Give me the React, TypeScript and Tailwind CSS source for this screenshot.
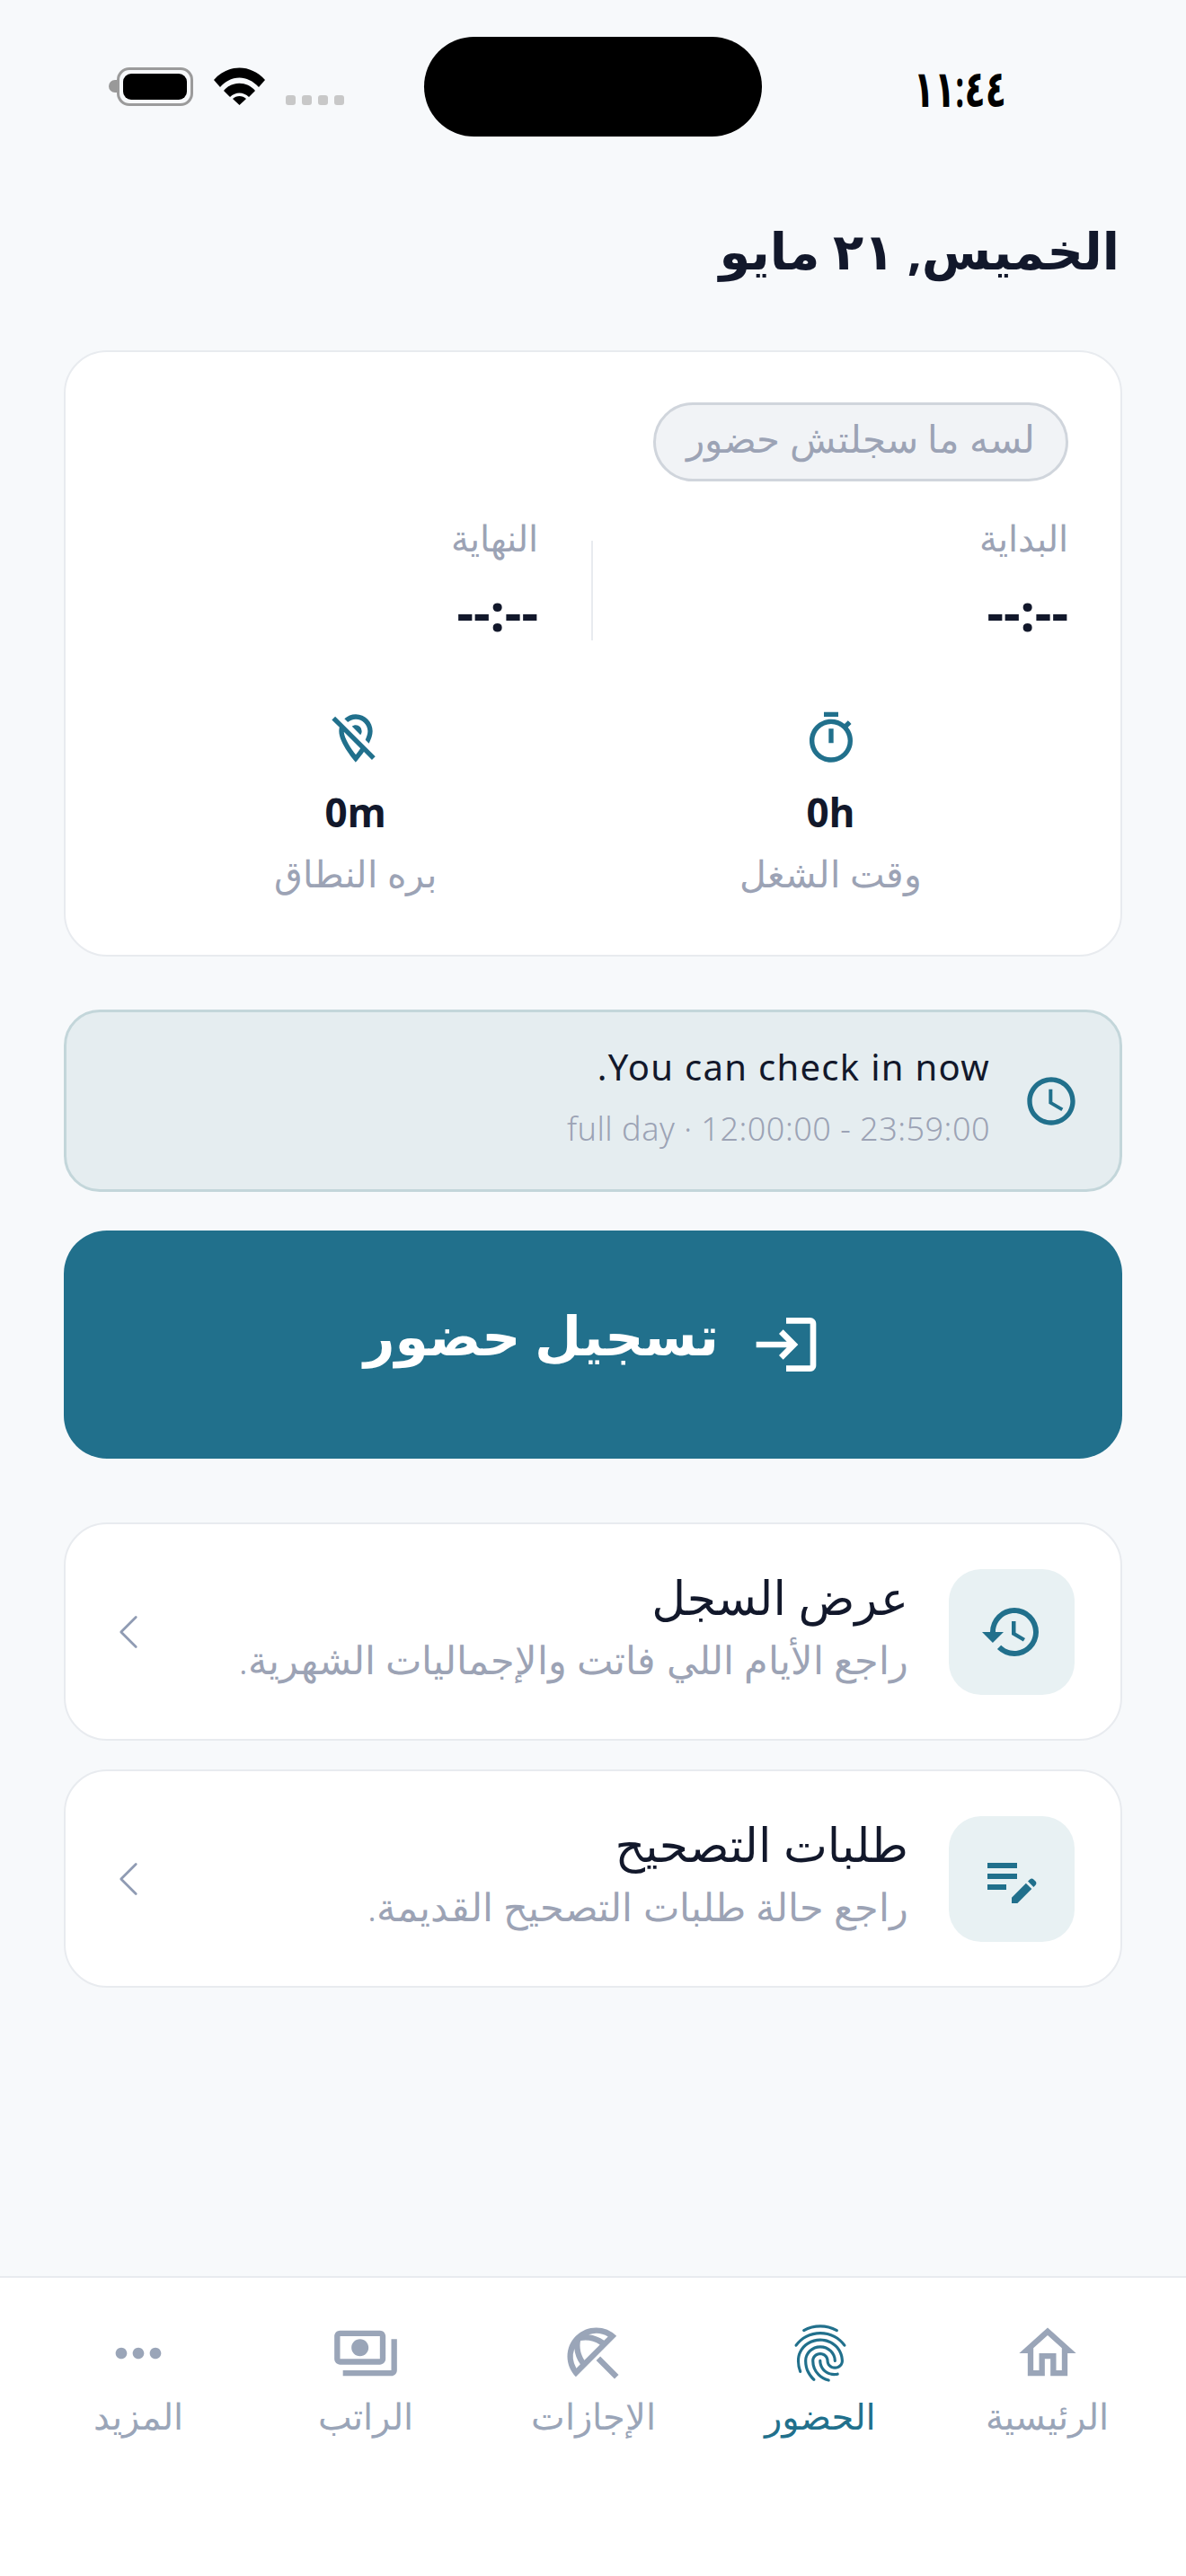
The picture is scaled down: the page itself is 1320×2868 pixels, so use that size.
import { ChevronLeft } from 'lucide-react';
import {
    MdEditNote,
    MdFingerprint,
    MdHistory,
    MdLogin,
    MdMoreHoriz,
    MdOutlineAccessTime,
    MdOutlineBeachAccess,
    MdOutlineHome,
    MdOutlineLocationOff,
    MdOutlinePayments,
    MdOutlineTimer,
} from 'react-icons/md';

const navItems = [
    { label: 'الرئيسية', Icon: MdOutlineHome },
    { label: 'الحضور', Icon: MdFingerprint, active: true },
    { label: 'الإجازات', Icon: MdOutlineBeachAccess },
    { label: 'الراتب', Icon: MdOutlinePayments },
    { label: 'المزيد', Icon: MdMoreHoriz },
];

const links = [
    { title: 'عرض السجل', sub: 'راجع الأيام اللي فاتت والإجماليات الشهرية.', Icon: MdHistory },
    { title: 'طلبات التصحيح', sub: 'راجع حالة طلبات التصحيح القديمة.', Icon: MdEditNote },
];

function StatusBar() {
    return (
        <div dir="ltr" className="relative h-[190px] shrink-0">
            <div className="flex items-start pl-[121px] pt-[75px]">
                <div className="mt-[14px] h-[14px] w-[9px] rounded-l-full bg-[#999999]" />
                <div className="flex h-[43px] w-[85px] items-center justify-center rounded-[14px] border-[3px] border-[#9b9b9b]">
                    <div className="h-[29px] w-[71px] rounded-[9px] bg-black" />
                </div>
                <svg className="ml-[23px] h-[42px] w-[57px]" viewBox="0 0 57 42" fill="black">
                    <path d="M0 14C16-4 41-4 57 14l-7 8C37 8 20 8 7 22z" />
                    <path d="M11 26c9-11 26-11 35 0l-7 7c-6-6-15-6-21 0z" />
                    <path d="M21 35c4-4 11-4 15 0l-7.500 7z" />
                </svg>
                <div className="ml-[23px] mt-[31px] flex gap-[7px]">
                    <div className="h-[11px] w-[11px] rounded-[3px] bg-[#c8c8c8]" />
                    <div className="h-[11px] w-[11px] rounded-[3px] bg-[#c8c8c8]" />
                    <div className="h-[11px] w-[11px] rounded-[3px] bg-[#c8c8c8]" />
                    <div className="h-[11px] w-[11px] rounded-[3px] bg-[#c8c8c8]" />
                </div>
            </div>
            <div className="absolute left-[472px] top-[41px] h-[111px] w-[376px] rounded-full bg-black" />
            <div className="absolute left-[1010px] top-[66px] w-[110px] origin-center scale-y-[1.5] text-right text-[38px] font-semibold leading-[60px] text-black">
                ١١:٤٤
            </div>
        </div>
    );
}

export default function App() {
    return (
        <div
            dir="rtl"
            className="flex h-[2868px] w-[1320px] flex-col bg-[#f7f9fb] font-['Noto_Sans','DejaVu_Sans',sans-serif] text-[#12182b]"
        >
            <StatusBar />

            <main className="flex flex-1 flex-col px-[71px]">
                <h1 className="h-[200px] pr-[3px] pt-[50px] text-[56px] font-bold leading-[76px]">الخميس, ٢١ مايو</h1>

                <section className="h-[675px] rounded-[48px] border-2 border-[#e8ebef] bg-white px-[58px] pt-[56px]">
                    <span className="inline-flex h-[88px] w-[462px] items-center justify-center rounded-full border-[3px] border-[#d0d5dc] bg-[#f1f3f6] pb-[10px] text-[42px] font-light text-[#9ca3b5]">
                        لسه ما سجلتش حضور
                    </span>

                    <div className="mt-[42px] grid grid-cols-2">
                        <div>
                            <div className="text-[40px] font-light leading-[42px] text-[#9ca3b5]">البداية</div>
                            <div className="mt-[31px] text-[58px] font-bold leading-[60px]">--:--</div>
                        </div>
                        <div className="mt-[24px] h-[111px] border-r-2 border-[#e8ebef] pr-[59px]">
                            <div className="-mt-[24px] text-[40px] font-light leading-[42px] text-[#9ca3b5]">النهاية</div>
                            <div className="mt-[31px] text-[58px] font-bold leading-[60px]">--:--</div>
                        </div>
                    </div>

                    <div className="mt-[77px] grid grid-cols-2">
                        <div className="flex flex-col items-center">
                            <MdOutlineTimer className="h-[64px] w-[64px] text-[#21708c]" />
                            <div className="mt-[22px] text-[44px] font-bold leading-[56px]">0h</div>
                            <div className="mt-[18px] text-[41px] font-light leading-[44px] text-[#9ca3b5]">وقت الشغل</div>
                        </div>
                        <div className="flex flex-col items-center">
                            <MdOutlineLocationOff className="h-[64px] w-[64px] text-[#21708c]" />
                            <div className="mt-[22px] text-[44px] font-bold leading-[56px]">0m</div>
                            <div className="mt-[18px] text-[41px] font-light leading-[44px] text-[#9ca3b5]">بره النطاق</div>
                        </div>
                    </div>
                </section>

                <section className="mt-[59px] flex h-[203px] items-center gap-[36px] rounded-[40px] border-[3px] border-[#c3d6da] bg-[#e5edf0] pr-[44px]">
                    <MdOutlineAccessTime className="h-[64px] w-[64px] shrink-0 text-[#21708c]" />
                    <div>
                        <div className="-mt-[11px] text-[40px] leading-[52px] tracking-[1.3px]">You can check in now.</div>
                        <div className="mt-[21px] text-[36px] font-light leading-[44px] tracking-[0.5px] text-[#9ca3b5]">full day · 12:00:00 - 23:59:00</div>
                    </div>
                </section>

                <button className="mt-[43px] flex h-[254px] items-center justify-center gap-[35px] rounded-[48px] bg-[#21708c] text-white">
                    <MdLogin className="h-[80px] w-[80px]" />
                    <span className="-mt-[22px] text-[60px] font-semibold">تسجيل حضور</span>
                </button>

                <div className="mt-[71px] flex flex-col gap-[32px]">
                    {links.map(({ title, sub, Icon }) => (
                        <a key={title} className="flex h-[243px] items-center rounded-[48px] border-2 border-[#e8ebef] bg-white pl-[37px] pr-[51px]">
                            <div className="flex h-[140px] w-[140px] shrink-0 items-center justify-center rounded-[36px] bg-[#e8f1f3]">
                                <Icon className="h-[72px] w-[72px] text-[#21708c]" />
                            </div>
                            <div className="mr-[45px] min-w-0 flex-1">
                                <div className="-mt-[13px] text-[52px] leading-[60px]">{title}</div>
                                <div className="mt-[15px] text-[43px] font-light leading-[50px] text-[#9ca3b5]">{sub}</div>
                            </div>
                            <ChevronLeft className="h-[66px] w-[66px] shrink-0 text-[#8f9bb3]" strokeWidth={1} />
                        </a>
                    ))}
                </div>
            </main>

            <nav className="grid h-[334px] shrink-0 grid-cols-5 border-t-2 border-[#e8ebef] bg-white px-[28px] pt-[46px]">
                {navItems.map(({ label, Icon, active }) => (
                    <div key={label} className={`flex flex-col items-center ${active ? 'text-[#21708c]' : 'text-[#9aa5b8]'}`}>
                        <Icon className="h-[76px] w-[76px]" />
                        <span className={`mt-[8px] text-[40px] leading-[48px] ${active ? 'font-medium' : 'font-light'}`}>{label}</span>
                    </div>
                ))}
            </nav>
        </div>
    );
}
